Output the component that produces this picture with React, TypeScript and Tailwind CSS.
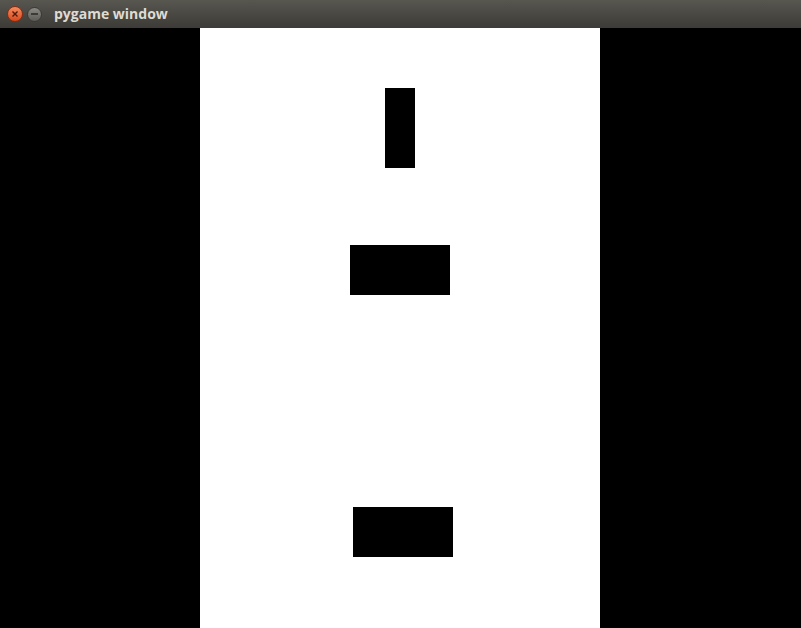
import React from 'react';

// pygame blocks: x/y relative to the white play column
const blocks = [
  { x: 185, y: 60, w: 30, h: 80 },
  { x: 150, y: 217, w: 100, h: 50 },
  { x: 153, y: 479, w: 100, h: 50 },
];

const App: React.FC = () => {
  return (
    <div className="w-[801px] h-[628px] bg-black overflow-hidden flex flex-col">
      <div className="h-[28px] flex items-center bg-gradient-to-b from-[#57564f] to-[#3c3b37] shrink-0">
        <div className="ml-[7px] w-[16px] h-[16px] rounded-full bg-gradient-to-b from-[#f48a5e] to-[#d9471a] border border-[#8a2c10] flex items-center justify-center">
          <svg width="8" height="8" viewBox="0 0 8 8">
            <path d="M1.5 1.5 L6.5 6.5 M6.5 1.5 L1.5 6.5" stroke="#4a1a0a" strokeWidth="1.4" />
          </svg>
        </div>
        <div className="ml-[4px] w-[15px] h-[15px] rounded-full bg-gradient-to-b from-[#8a8984] to-[#5d5c57] border border-[#3a3935] flex items-center justify-center">
          <div className="w-[7px] h-[2px] bg-[#3c3b37]" />
        </div>
        <span className="ml-[12px] text-[14px] font-bold text-[#dfdbd2] font-['Open_Sans',sans-serif] leading-none">
          pygame window
        </span>
      </div>
      <div className="flex h-[600px]">
        <div className="w-[200px] bg-black" />
        <div className="w-[400px] bg-white relative">
          {blocks.map((b, i) => (
            <div
              key={i}
              className="absolute bg-black"
              style={{ left: b.x, top: b.y, width: b.w, height: b.h }}
            />
          ))}
        </div>
        <div className="flex-1 bg-black" />
      </div>
    </div>
  );
};

export default App;
